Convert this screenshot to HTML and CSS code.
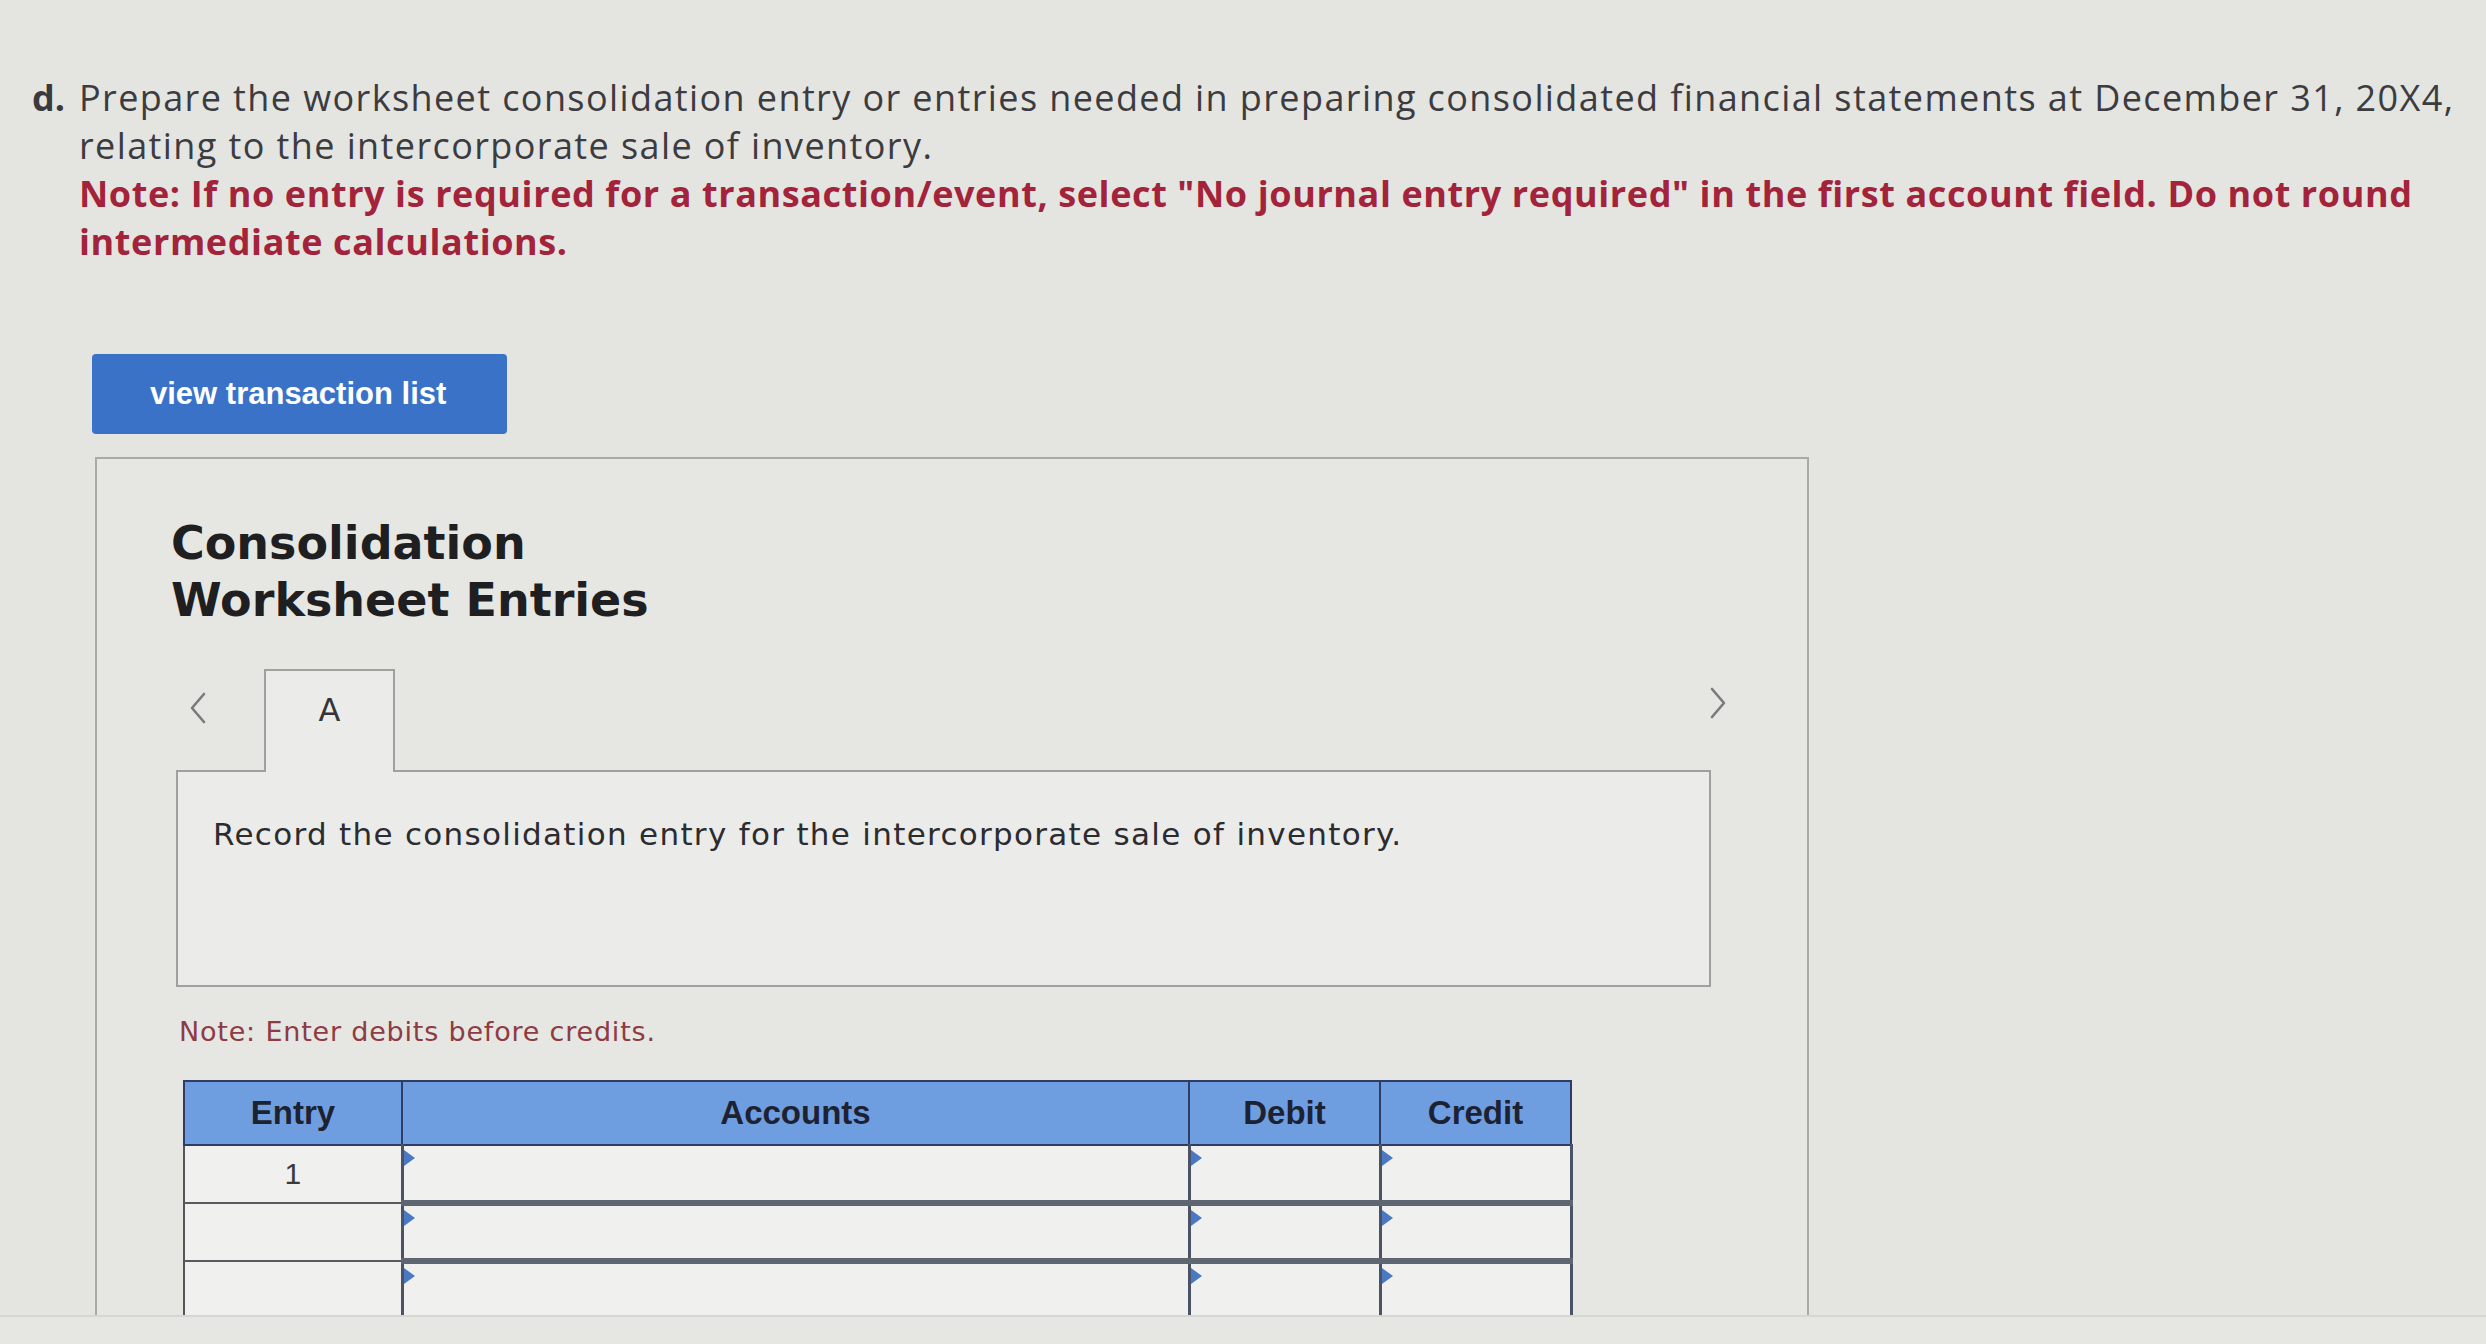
FILE: index.html
```html
<!DOCTYPE html>
<html lang="en">
<head>
<meta charset="utf-8">
<title>Consolidation Worksheet Entries</title>
<link rel="stylesheet" href="styles.css">
</head>
<body>
<div class="screen">
  <div class="question">
    <div class="qlabel">d.</div>
    <div class="qbody">
      <p class="qtext">Prepare the worksheet consolidation entry or entries needed in preparing consolidated financial statements at December 31, 20X4, relating to the intercorporate sale of inventory.</p>
      <p class="qnote">Note: If no entry is required for a transaction/event, select "No journal entry required" in the first account field. Do not round intermediate calculations.</p>
    </div>
  </div>

  <button class="btn-list" type="button">view transaction list</button>

  <section class="panel">
    <h2 class="panel-title">Consolidation<br>Worksheet Entries</h2>

    <div class="tabsec">
      <div class="tabbar">
        <div class="nav nav-prev">
          <svg width="18" height="32" viewBox="0 0 18 32"><polyline points="15,2 3,16 15,30" fill="none" stroke="#7a7a7a" stroke-width="2.6" stroke-linejoin="round" stroke-linecap="round"/></svg>
        </div>
        <div class="tab">A</div>
        <div class="tab-spacer"></div>
        <div class="nav nav-next">
          <svg width="18" height="32" viewBox="0 0 18 32"><polyline points="3,2 15,16 3,30" fill="none" stroke="#7a7a7a" stroke-width="2.6" stroke-linejoin="round" stroke-linecap="round"/></svg>
        </div>
      </div>
      <div class="tabbox">
        <p class="tabtext">Record the consolidation entry for the intercorporate sale of inventory.</p>
      </div>

      <p class="enter-note">Note: Enter debits before credits.</p>

      <table class="journal">
        <thead>
          <tr>
            <th class="c-entry">Entry</th>
            <th class="c-acct">Accounts</th>
            <th class="c-num">Debit</th>
            <th class="c-num">Credit</th>
          </tr>
        </thead>
        <tbody>
          <tr>
            <td class="c-entry">1</td>
            <td class="c-in"></td>
            <td class="c-in"></td>
            <td class="c-in"></td>
          </tr>
          <tr>
            <td class="c-entry"></td>
            <td class="c-in"></td>
            <td class="c-in"></td>
            <td class="c-in"></td>
          </tr>
          <tr>
            <td class="c-entry"></td>
            <td class="c-in"></td>
            <td class="c-in"></td>
            <td class="c-in"></td>
          </tr>
        </tbody>
      </table>
    </div>
  </section>
</div>
<div class="bottom-strip"></div>
</body>
</html>
```

FILE: styles.css
```css
html, body {
  margin: 0;
  padding: 0;
}

body {
  background: #e4e4e1;
  width: 2486px;
  height: 1344px;
  overflow: hidden;
  font-family: "Open Sans", Lato, sans-serif;
}

.screen {
  height: 1315px;
  overflow: hidden;
}

.question {
  display: flex;
  padding: 74px 0 0 32px;
}

.qlabel {
  width: 47px;
  flex: none;
  font-size: 36px;
  line-height: 48px;
  font-weight: 700;
  color: #3a3a3e;
}

.qbody {
  width: 2420px;
}

.qtext {
  margin: 0;
  width: 2400px;
  font-size: 36px;
  line-height: 48px;
  letter-spacing: 1.4px;
  color: #3c3c40;
}

.qnote {
  margin: 0;
  width: 2350px;
  font-size: 36px;
  line-height: 48px;
  font-weight: 700;
  letter-spacing: 0.6px;
  color: #a3233a;
}

.btn-list {
  display: block;
  margin: 88px 0 0 92px;
  width: 415px;
  height: 80px;
  padding: 0 0 0 58px;
  text-align: left;
  border: none;
  border-radius: 4px;
  background: #3a72c8;
  color: #ffffff;
  font-family: "Liberation Sans", Arial, sans-serif;
  font-weight: 700;
  font-size: 31px;
}

.panel {
  margin: 23px 0 0 95px;
  width: 1714px;
  height: 900px;
  border: 2px solid #a9a9a5;
  background: #e6e6e3;
  padding: 56px 0 0 74px;
  box-sizing: border-box;
}

.panel-title {
  margin: 0;
  font-family: "DejaVu Sans", Verdana, sans-serif;
  font-weight: 700;
  font-size: 46px;
  line-height: 57px;
  color: #1f1f22;
}

.tabsec {
  margin: 40px 0 0 5px;
  width: 1535px;
}

.tabbar {
  display: flex;
  align-items: stretch;
  height: 101px;
}

.nav {
  display: flex;
  align-items: center;
}

.nav-prev {
  width: 88px;
  padding: 0 0 0 13px;
  box-sizing: border-box;
  margin-top: -24px;
}

.nav-next {
  margin-right: -16px;
  margin-top: -34px;
}

.tab {
  width: 131px;
  box-sizing: border-box;
  border: 2px solid #a0a09c;
  border-bottom: none;
  background: #ebebe9;
  margin-bottom: -2px;
  position: relative;
  z-index: 1;
  font-family: "DejaVu Sans", Verdana, sans-serif;
  font-size: 32px;
  line-height: 38px;
  color: #343438;
  text-align: center;
  padding-top: 20px;
}

.tab-spacer {
  flex: 1;
}

.tabbox {
  height: 217px;
  box-sizing: border-box;
  border: 2px solid #a0a09c;
  background: #ebebe9;
  padding: 44px 0 0 35px;
}

.tabtext {
  margin: 0;
  font-family: "DejaVu Sans", Verdana, sans-serif;
  font-size: 31px;
  line-height: 36px;
  letter-spacing: 1.3px;
  color: #2c2c30;
}

.enter-note {
  margin: 29px 0 0 3px;
  font-family: "DejaVu Sans", Verdana, sans-serif;
  font-size: 27px;
  line-height: 32px;
  letter-spacing: 0.8px;
  color: #8e3b42;
}

.journal {
  margin: 32px 0 0 7px;
  border-collapse: collapse;
  table-layout: fixed;
  width: 1387px;
}

.journal th {
  height: 64px;
  box-sizing: border-box;
  background: #6f9ee0;
  border: 2px solid #2f3c63;
  font-family: "Liberation Sans", Arial, sans-serif;
  font-weight: 700;
  font-size: 33px;
  color: #1d2233;
  text-align: center;
  padding: 0;
}

.journal th.c-entry { width: 218px; }
.journal th.c-acct { width: 787px; }
.journal th.c-num { width: 191px; }

.journal td {
  height: 58px;
  box-sizing: border-box;
  background: #f0f0ee;
  padding: 0;
}

.journal td.c-entry {
  border-left: 2px solid #56565a;
  border-bottom: 2px solid #5a5a5e;
  text-align: center;
  font-family: "Liberation Sans", Arial, sans-serif;
  font-size: 30px;
  color: #3a3a3e;
}

.journal td.c-in {
  position: relative;
  border-left: 3px solid #4b5366;
  border-right: 3px solid #4b5366;
  border-bottom: 6px solid #5e6672;
}

.journal td.c-in::before {
  content: "";
  position: absolute;
  left: 0;
  top: 4px;
  width: 0;
  height: 0;
  border-top: 8px solid transparent;
  border-bottom: 8px solid transparent;
  border-left: 11px solid #4a78c2;
}

.bottom-strip {
  height: 29px;
  border-top: 2px solid #d6d6d2;
  background: #e6e6e3;
}
```
